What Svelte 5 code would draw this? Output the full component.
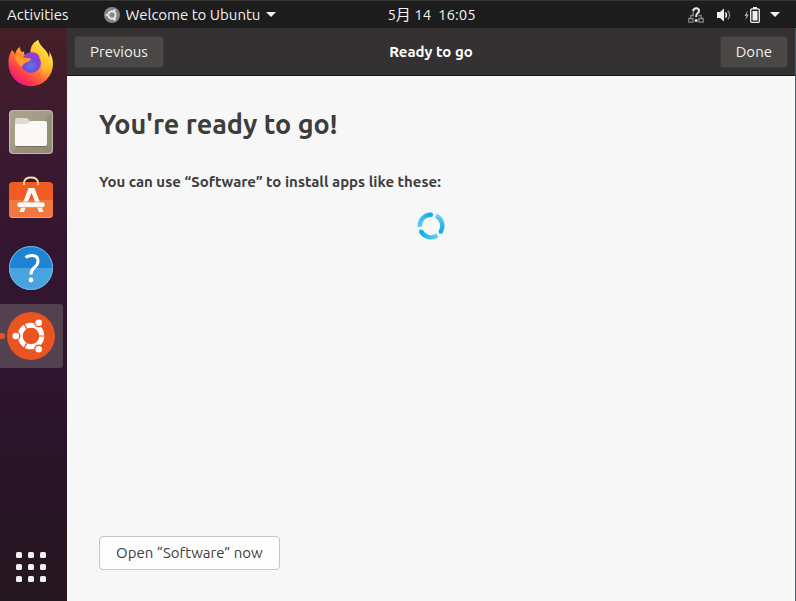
<script>
  const dots = [0, 1, 2].flatMap((row) => [0, 1, 2].map((col) => ({ x: 1 + col * 12, y: 1 + row * 12 })));
</script>

{#snippet circleOfFriends(ring, gap)}
  <circle cx="24" cy="24" r="10.8" fill="none" stroke={ring} stroke-width="5" />
  <path d="M24 24H40M24 24 16 10.1M24 24 16 37.9" stroke={gap} stroke-width="1.2" />
  <g fill={ring} stroke={gap} stroke-width="1.4">
    <circle cx="8.8" cy="24" r="4" />
    <circle cx="31.7" cy="10.7" r="4" />
    <circle cx="31.7" cy="37.3" r="4" />
  </g>
{/snippet}

<div class="desktop">
  <header class="topbar">
    <div class="left">
      <button class="plain">Activities</button>
      <button class="plain appmenu">
        <svg width="16" height="16" viewBox="0 0 48 48" aria-hidden="true">
          <circle cx="24" cy="24" r="24" fill="#858585" />
          {@render circleOfFriends('#ffffff', '#858585')}
        </svg>
        <span>Welcome to Ubuntu</span>
        <svg width="10" height="5" viewBox="0 0 10 5" aria-hidden="true"><path d="M0 0H10L5 5Z" fill="#f2f2f2" /></svg>
      </button>
    </div>
    <button class="plain clock">5月 14&nbsp; 16:05</button>
    <button class="plain status" aria-label="System menu">
      <span class="indicators">
        <svg width="16" height="16" viewBox="0 0 16 16" aria-hidden="true">
          <path d="M.8 11.5H5V15.2H.8ZM11 11.5H15.2V15.2H11ZM2.8 11.5V8.5H6M13.2 11.5V8.5H10.5M5.2 8V2.8" fill="none" stroke="#858585" stroke-width="1.3" />
          <path d="M5.2 4Q5.6 1.3 8.3 1.3T11 4Q11 5.2 9.5 6.3T8.2 10" fill="none" stroke="#e6e6e6" stroke-width="2" />
          <circle cx="8.2" cy="13.5" r="1.5" fill="#f2f2f2" />
        </svg>
        <svg width="16" height="16" viewBox="0 0 16 16" aria-hidden="true">
          <path d="M1 5H4L8 1.5V14.5L4 11H1Z" fill="#f2f2f2" />
          <path d="M9.5 5.5Q11.3 8 9.5 10.5" fill="none" stroke="#f2f2f2" stroke-width="1.5" />
          <path d="M11.8 3.5Q15.5 8 11.8 12.5" fill="none" stroke="#888888" stroke-width="1.3" />
        </svg>
        <svg width="16" height="16" viewBox="0 0 16 16" aria-hidden="true">
          <path d="M3.5 3.5 .5 9H2.2L1.5 13 4.8 7.4H3Z" fill="#a8a8a8" />
          <path d="M9 0H13V2H9Z" fill="#f2f2f2" />
          <rect x="6.7" y="1.9" width="8.6" height="13.4" rx="1" fill="none" stroke="#f2f2f2" stroke-width="1.3" />
          <path d="M8.5 4H13.5V13.5H8.5Z" fill="#f2f2f2" />
        </svg>
      </span>
      <svg width="10" height="5" viewBox="0 0 10 5" aria-hidden="true"><path d="M0 0H10L5 5Z" fill="#f2f2f2" /></svg>
    </button>
  </header>

  <div class="body">
    <nav class="dock" aria-label="Dock">
      <button class="launcher" aria-label="Firefox">
        <svg width="48" height="48" viewBox="0 0 48 48" aria-hidden="true">
          <defs>
            <linearGradient id="flame" x1=".85" y1=".1" x2=".2" y2=".95">
              <stop offset="0" stop-color="#fff44f" />
              <stop offset=".3" stop-color="#ffc22e" />
              <stop offset=".58" stop-color="#ff7139" />
              <stop offset=".8" stop-color="#ff3750" />
              <stop offset="1" stop-color="#e31587" />
            </linearGradient>
            <radialGradient id="globe" cx=".5" cy=".65" r=".65">
              <stop offset="0" stop-color="#6173e8" />
              <stop offset=".55" stop-color="#7548d8" />
              <stop offset="1" stop-color="#a23bdb" />
            </radialGradient>
            <linearGradient id="tail" x1=".8" y1="0" x2=".3" y2="1">
              <stop offset="0" stop-color="#fff14a" />
              <stop offset=".5" stop-color="#ffc42b" />
              <stop offset="1" stop-color="#ff8a34" />
            </linearGradient>
          </defs>
          <path d="M5 10Q7.5 12 8 14.5Q9 9 13 7Q12.5 10 15 12L17.5 11.5Q16 15 20 16L24 15Q22 5 31 0Q32 4 36 8Q41 12 42 18Q43 13 42 11Q46 17 46 24A22.25 22.25 0 0 1 1.5 24Q1 16 5 10Z" fill="url(#flame)" />
          <path d="M23.5 15Q22 5 31 0Q32 4 36 8Q43 14 42 24Q41 33 33 36Q37 27 31 18Z" fill="url(#tail)" />
          <circle cx="24" cy="23" r="10" fill="url(#globe)" />
          <path d="M19 13.5Q29 10 33 17L29.5 16.5Q34 20 33.5 25Q31 17 19 15Z" fill="#9a3bdb" />
          <path d="M8 17Q11 15 15 17.5Q20 18 24 18.5Q24.5 21 19 22.5Q16 24 14.5 27Q10 24 8 17Z" fill="#ff9825" />
        </svg>
      </button>
      <button class="launcher" aria-label="Files">
        <svg width="48" height="48" viewBox="0 0 48 48" aria-hidden="true">
          <defs><linearGradient id="files" x1="0" y1="0" x2="1" y2="1"><stop stop-color="#aaa48f" /><stop offset=".5" stop-color="#a29a84" /><stop offset=".52" stop-color="#989079" /><stop offset="1" stop-color="#918a74" /></linearGradient></defs>
          <rect x="2" y="2" width="44" height="44" rx="4" fill="url(#files)" />
          <rect x="2.5" y="2.5" width="43" height="43" rx="4" fill="none" stroke="#c1bca9" />
          <path d="M8 17V12Q8 10 10 10H19Q21 10 22 12L23 14H38V20H8Z" fill="#dedacd" />
          <path d="M8 18Q8 16 10 16H20L23 13H38Q40 13 40 15V36Q40 38 38 38H10Q8 38 8 36Z" fill="#faf9f7" />
          <path d="M9 38.5H39" stroke="#777058" />
        </svg>
      </button>
      <button class="launcher" aria-label="Ubuntu Software">
        <svg width="48" height="48" viewBox="0 0 48 48" aria-hidden="true">
          <rect x="2" y="6" width="44" height="36" rx="4" fill="#f15c22" />
          <path d="M2 24H46V38Q46 42 42 42H6Q2 42 2 38Z" fill="#f2773f" />
          <path d="M3 39Q3 41.5 6 41.5H42Q45 41.5 45 39" fill="none" stroke="#ff9d6c" />
          <path d="M17 9V6Q18 1.5 24 1.5T31 6V9" fill="none" stroke="#f6dbac" stroke-width="1.8" />
          <path d="M21.5 12H27.5L36.5 36H32L24.5 16.8 17 36H12.5Z" fill="#fbf8f3" />
          <rect x="10" y="26" width="28" height="5.4" rx="2.7" fill="#fffdf8" stroke="#e46f43" stroke-width=".6" />
        </svg>
      </button>
      <button class="launcher" aria-label="Help">
        <svg width="48" height="48" viewBox="0 0 48 48" aria-hidden="true">
          <circle cx="24" cy="24" r="22" fill="#1e83d3" />
          <path d="M2 24H46A22 22 0 0 1 2 24Z" fill="#48a3df" />
          <circle cx="24" cy="24" r="21.5" fill="none" stroke="#70b7e8" />
          <path d="M18.5 13.5Q21 11.5 25 11.5Q31 11.5 31 17Q31 20.5 27.5 23.5Q24 26 24 30.5" fill="none" stroke="#ffffff" stroke-width="3" />
          <circle cx="24" cy="36" r="2.4" fill="#ffffff" />
        </svg>
      </button>
      <button class="launcher active" aria-label="Welcome to Ubuntu">
        <svg width="48" height="48" viewBox="0 0 48 48" aria-hidden="true">
          <circle cx="24" cy="24" r="24" fill="#e95420" />
          {@render circleOfFriends('#ffffff', '#e95420')}
        </svg>
      </button>
      <button class="launcher apps" aria-label="Show Applications">
        <svg width="32" height="32" viewBox="0 0 32 32" aria-hidden="true">
          {#each dots as dot}
            <rect x={dot.x} y={dot.y} width="6" height="6" rx="1.5" fill="#f2f1f0" />
          {/each}
        </svg>
      </button>
    </nav>

    <main class="window">
      <div class="headerbar">
        <button class="dark">Previous</button>
        <h2>Ready to go</h2>
        <button class="dark">Done</button>
      </div>
      <section class="content">
        <h1>You're ready to go!</h1>
        <p>You can use “Software” to install apps like these:</p>
        <svg class="spinner" width="28" height="28" viewBox="0 0 28 28" role="img" aria-label="Loading">
          <defs>
            <linearGradient id="arc" x1="1" y1="0" x2="0" y2="1"><stop stop-color="#12adea" /><stop offset="1" stop-color="#62ccf2" /></linearGradient>
          </defs>
          <g fill="none" stroke="url(#arc)" stroke-width="4.4">
            <path d="M2.7 14.8A11.3 11.3 0 0 1 14 2.7" />
            <path d="M2.7 14.8A11.3 11.3 0 0 1 14 2.7" transform="rotate(120 14 14)" />
            <path d="M2.7 14.8A11.3 11.3 0 0 1 14 2.7" transform="rotate(240 14 14)" />
          </g>
          <g fill="#12adea">
            <circle cx="14" cy="2.7" r="2.2" />
            <circle cx="23.8" cy="19.65" r="2.2" />
            <circle cx="4.2" cy="19.65" r="2.2" />
          </g>
        </svg>
        <button class="light">Open “Software” now</button>
      </section>
    </main>
  </div>
</div>

<style>
  :global(body) {
    margin: 0;
  }
  .desktop {
    min-height: 100vh;
    display: flex;
    flex-direction: column;
    font-family: Ubuntu, "Noto Sans", "Noto Sans CJK SC", sans-serif;
    font-size: 15px;
    line-height: 20px;
    color: #3d3d3d;
  }
  button {
    font: inherit;
    color: inherit;
    box-sizing: border-box;
    margin: 0;
    cursor: pointer;
  }
  svg {
    display: block;
    flex: none;
  }
  .topbar {
    display: grid;
    grid-template-columns: 1fr auto 1fr;
    align-items: center;
    box-sizing: border-box;
    height: 28px;
    padding: 0 16px 0 7px;
    border-top: 1px solid #353535;
    background: #1d1d1d;
    color: #f2f2f2;
  }
  .plain {
    padding: 0;
    border: 0;
    background: none;
    white-space: nowrap;
  }
  .left {
    display: flex;
    gap: 35px;
  }
  .appmenu {
    display: flex;
    align-items: center;
    gap: 6px;
  }
  .clock {
    padding-left: 76px;
  }
  .status {
    justify-self: end;
    display: flex;
    align-items: center;
    gap: 10px;
  }
  .indicators {
    display: flex;
    gap: 12px;
  }
  .body {
    flex: 1;
    display: flex;
  }
  .dock {
    flex: none;
    box-sizing: border-box;
    width: 67px;
    padding: 4px 4px 2px 0;
    display: flex;
    flex-direction: column;
    gap: 4px;
    background: linear-gradient(#451f28, #3b1931 22%, #34152f 38%, #2f1530 60%, #291425 80%, #25171f);
  }
  .launcher {
    width: 63px;
    height: 64px;
    padding: 0 1px 0 0;
    display: flex;
    align-items: center;
    justify-content: center;
    border: 0;
    border-radius: 0 3px 3px 0;
    background: none;
  }
  .active {
    position: relative;
    background: #53414f;
  }
  .active::before {
    content: "";
    position: absolute;
    left: -1px;
    top: 29px;
    width: 6px;
    height: 6px;
    border-radius: 50%;
    background: #e95420;
  }
  .apps {
    margin-top: auto;
  }
  .window {
    flex: 1;
    min-width: 0;
    display: flex;
    flex-direction: column;
    background: #f7f7f7;
    border-right: 1px solid #45606c;
  }
  .headerbar {
    box-sizing: border-box;
    height: 48px;
    padding: 0 7px;
    display: grid;
    grid-template-columns: 1fr auto 1fr;
    align-items: center;
    background: #333132;
    border-bottom: 1px solid #1b1719;
    color: #ffffff;
  }
  .headerbar .dark:last-child {
    justify-self: end;
  }
  .dark {
    justify-self: start;
    height: 32px;
    padding: 0 15px;
    border: 1px solid #3d3b3a;
    border-radius: 3px;
    background: #494846;
    color: #f2f2f2;
  }
  h2 {
    margin: 0;
    font-size: 15px;
    font-weight: 700;
  }
  .content {
    flex: 1;
    display: flex;
    flex-direction: column;
    align-items: flex-start;
    padding: 32px 32px 31px;
  }
  h1 {
    margin: 0 0 32px;
    font-size: 27px;
    line-height: 32px;
    font-weight: 700;
  }
  p {
    margin: 0 0 20px;
    font-weight: 700;
  }
  .spinner {
    align-self: center;
  }
  .light {
    height: 34px;
    margin-top: auto;
    padding: 0 16px;
    border: 1px solid #c6c6c6;
    border-radius: 4px;
    background: #fdfdfd;
  }
</style>
